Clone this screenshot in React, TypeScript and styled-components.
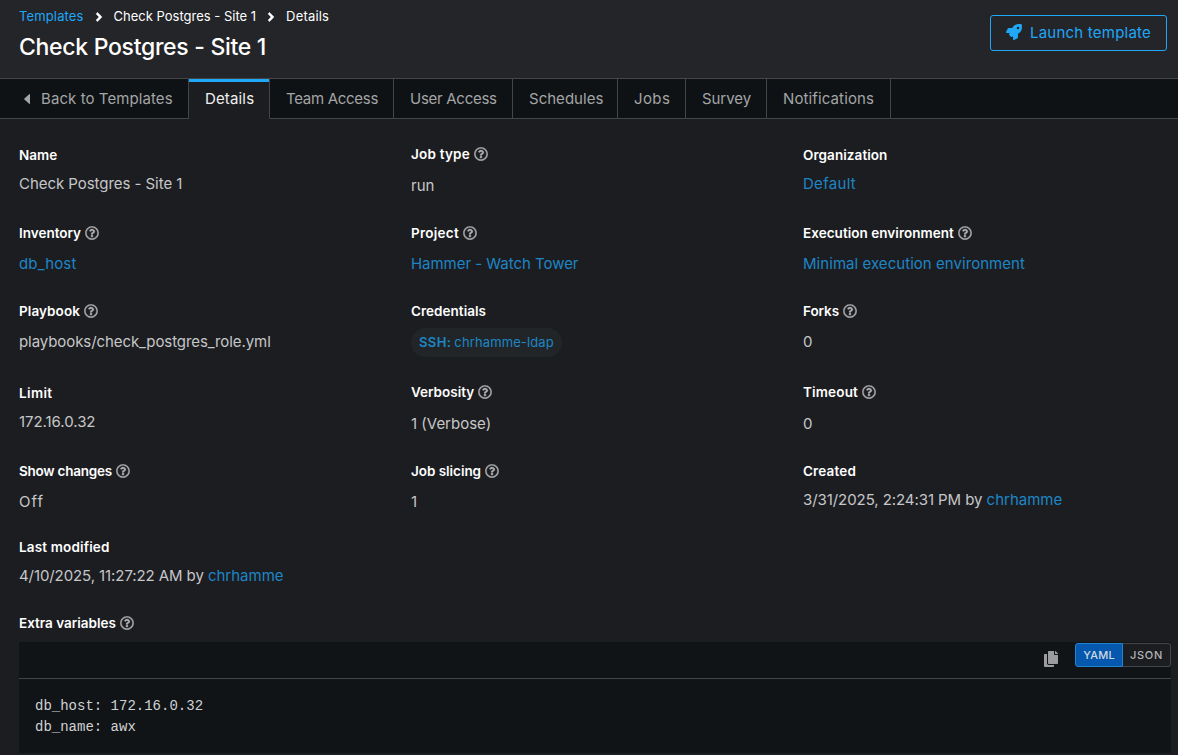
import React from 'react';
import styled, { createGlobalStyle } from 'styled-components';
import { FaAngleRight, FaCopy, FaRegQuestionCircle, FaRocket } from 'react-icons/fa';

const color = {
  header: '#242529',
  tabs: '#0f1214',
  content: '#1c1d21',
  editor: '#111417',
  border: '#444548',
  text: '#c6c7c8',
  muted: '#a3a5a7',
  link: '#1e86c6',
  accent: '#1fa7f8',
};

const GlobalStyle = createGlobalStyle`
  *, *::before, *::after { box-sizing: border-box; }
  body {
    margin: 0;
    background: ${color.content};
    color: ${color.text};
    font-family: Inter, sans-serif;
    overflow: hidden;
  }
  #root { height: 100vh; }
`;

const Tracked = styled.span<{ $track?: number }>`
  letter-spacing: ${({ $track = 0 }) => $track}px;
  white-space: pre;
`;

const Page = styled.div`
  display: flex;
  flex-direction: column;
  height: 755px;
`;

const Header = styled.header`
  display: flex;
  justify-content: space-between;
  align-items: flex-start;
  height: 78px;
  padding: 0 11px 0 19px;
  background: ${color.header};
`;

const Breadcrumb = styled.nav`
  display: flex;
  align-items: center;
  height: 21px;
  margin-top: 6px;
  font-size: 13px;
  line-height: 21px;
  color: #fff;

  svg {
    width: 14px;
    height: 14px;
    margin: 0 8px;
    stroke: currentColor;
    stroke-width: 14px;
  }
`;

const BreadcrumbLink = styled(Tracked)`
  color: ${color.accent};
`;

const Title = styled.h1`
  margin: 5px 0 0;
  font-size: 23px;
  font-weight: 500;
  line-height: 31px;
  color: #fff;
`;

const LaunchButton = styled.button`
  display: flex;
  align-items: center;
  gap: 8px;
  width: 177px;
  height: 36px;
  margin-top: 15px;
  padding: 0 15px;
  border: 1px solid ${color.accent};
  border-radius: 3px;
  background: transparent;
  color: ${color.accent};
  font: 400 15px/24px Inter, sans-serif;

  svg {
    margin-bottom: 2px;
  }
`;

const TabBar = styled.nav`
  display: flex;
  height: 41px;
  border-top: 1px solid ${color.border};
  background: ${color.tabs};
`;

const Tab = styled.a<{ $width: number; $active?: boolean }>`
  display: flex;
  align-items: center;
  flex: none;
  width: ${({ $width }) => $width}px;
  padding-left: 16px;
  border-right: 1px solid ${color.border};
  border-bottom: 1px solid ${({ $active }) => ($active ? color.content : color.border)};
  background: ${({ $active }) => ($active ? color.content : 'transparent')};
  color: ${({ $active }) => ($active ? '#f0f0f0' : color.muted)};
  font-size: 15px;
  line-height: 24px;
  box-shadow: ${({ $active }) => ($active ? `inset 0 3px 0 ${color.accent}` : 'none')};
`;

const BackTab = styled(Tab)`
  padding-left: 24px;
  gap: 11px;
`;

const TabFill = styled.div`
  flex: 1;
  border-bottom: 1px solid ${color.border};
`;

const Details = styled.main`
  padding: 25px 7px 0 19px;
`;

const DetailRow = styled.section<{ $height: number }>`
  display: grid;
  grid-template-columns: repeat(3, 392px);
  align-items: start;
  height: ${({ $height }) => $height}px;
`;

const DetailItem = styled.div<{ $inset?: number }>`
  display: flex;
  flex-direction: column;
  align-items: flex-start;
  padding-top: ${({ $inset = 0 }) => $inset}px;
`;

const Label = styled.div`
  display: flex;
  align-items: center;
  gap: 4px;
  height: 21px;
  font-size: 13.5px;
  font-weight: 600;
  line-height: 21px;
  color: #fff;

  svg {
    width: 14px;
    height: 14px;
    margin-bottom: 1px;
    color: #acadaf;
    stroke: currentColor;
    stroke-width: 10px;
  }
`;

const Value = styled.div<{ $gap: number }>`
  margin-top: ${({ $gap }) => $gap}px;
  font-size: 15px;
  line-height: 24px;
`;

const Link = styled(Tracked)`
  color: ${color.link};
`;

const Chip = styled.span`
  display: flex;
  align-items: center;
  gap: 3px;
  width: 151px;
  height: 29px;
  margin-top: 6px;
  padding-left: 8px;
  border-radius: 15px;
  background: #212528;
  color: ${color.link};
  font-size: 13px;
  line-height: 21px;
`;

const ChipKind = styled(Tracked)`
  font-weight: 600;
`;

const Editor = styled.section`
  height: 111px;
  margin-top: 8px;
  background: ${color.editor};
`;

const EditorToolbar = styled.div`
  display: flex;
  justify-content: flex-end;
  align-items: flex-start;
  height: 37px;
  padding-top: 1px;
  border-bottom: 1px solid ${color.border};
`;

const CopyButton = styled.button`
  display: flex;
  margin: 8px 17px 0 0;
  padding: 0;
  border: 0;
  background: none;
  color: #9b9c9e;

  svg {
    width: 14px;
    height: 16px;
  }
`;

const ModeButton = styled.button<{ $selected?: boolean }>`
  width: 48px;
  height: 24px;
  padding: 0;
  border: 1px solid ${({ $selected }) => ($selected ? '#1f86cf' : color.border)};
  border-left-width: ${({ $selected }) => ($selected ? 1 : 0)}px;
  border-radius: ${({ $selected }) => ($selected ? '3px 0 0 3px' : '0 3px 3px 0')};
  background: ${({ $selected }) => ($selected ? '#0558ad' : color.content)};
  color: ${({ $selected }) => ($selected ? '#cfd8e2' : '#b4b5b7')};
  font: 500 11px/18px Inter, sans-serif;
  letter-spacing: ${({ $selected }) => ($selected ? 0.2 : 0.7)}px;
`;

const Code = styled.pre`
  margin: 0;
  padding: 17px 16px;
  font: 14px/21px 'Liberation Mono', monospace;
  color: #d0d1d2;
`;

type DetailProps = {
  label: string;
  track?: number;
  help?: boolean;
  inset?: number;
  gap?: number;
  children: React.ReactNode;
};

function Detail({ label, track, help, inset, gap = 8, children }: DetailProps) {
  return (
    <DetailItem $inset={inset}>
      <Label>
        <Tracked $track={track}>{label}</Tracked>
        {help && <FaRegQuestionCircle />}
      </Label>
      <Value $gap={gap}>{children}</Value>
    </DetailItem>
  );
}

const tabs = [
  { name: 'Details', width: 81, track: 0.15, active: true },
  { name: 'Team Access', width: 124, track: -0.29 },
  { name: 'User Access', width: 119, track: -0.28 },
  { name: 'Schedules', width: 105, track: 0.02 },
  { name: 'Jobs', width: 68, track: 0.4 },
  { name: 'Survey', width: 81, track: -0.06 },
  { name: 'Notifications', width: 124, track: 0.12 },
];

export default function App() {
  return (
    <Page>
      <GlobalStyle />
      <Header>
        <div>
          <Breadcrumb>
            <BreadcrumbLink $track={0.14}>Templates</BreadcrumbLink>
            <FaAngleRight />
            <Tracked $track={0}>Check Postgres - Site 1</Tracked>
            <FaAngleRight />
            <Tracked $track={0.18}>Details</Tracked>
          </Breadcrumb>
          <Title>
            <Tracked $track={-0.3}>Check Postgres - Site 1</Tracked>
          </Title>
        </div>
        <LaunchButton>
          <FaRocket size={16} />
          <Tracked $track={0.22}>Launch template</Tracked>
        </LaunchButton>
      </Header>

      <TabBar>
        <BackTab $width={189}>
          <svg width="6" height="10" viewBox="0 0 6 10" fill="currentColor">
            <path d="M6 .6v8.8c0 .5-.5.7-.8.4L.4 5.4a.5.5 0 0 1 0-.8L5.200.2c.3-.3.8-.1.8.4z" />
          </svg>
          <Tracked $track={0.08}>Back to Templates</Tracked>
        </BackTab>
        {tabs.map((t) => (
          <Tab key={t.name} $width={t.width} $active={t.active}>
            <Tracked $track={t.track}>{t.name}</Tracked>
          </Tab>
        ))}
        <TabFill />
      </TabBar>

      <Details>
        <DetailRow $height={79}>
          <Detail label="Name" inset={1} gap={6}>
            <Tracked $track={-0.05}>Check Postgres - Site 1</Tracked>
          </Detail>
          <Detail label="Job type" track={0.2} help gap={9}>run</Detail>
          <Detail label="Organization" track={0.07} inset={1} gap={6}>
            <Link $track={0.29}>Default</Link>
          </Detail>
        </DetailRow>

        <DetailRow $height={78}>
          <Detail label="Inventory" help>
            <Link $track={0.15}>db_host</Link>
          </Detail>
          <Detail label="Project" track={0.27} help>
            <Link $track={-0.03}>Hammer - Watch Tower</Link>
          </Detail>
          <Detail label="Execution environment" track={0.04} help>
            <Link $track={0.05}>Minimal execution environment</Link>
          </Detail>
        </DetailRow>

        <DetailRow $height={81}>
          <Detail label="Playbook" track={0.08} help>
            <Tracked $track={-0.08}>playbooks/check_postgres_role.yml</Tracked>
          </Detail>
          <DetailItem>
            <Label>
              <Tracked $track={0.03}>Credentials</Tracked>
            </Label>
            <Chip>
              <ChipKind $track={0.4}>SSH:</ChipKind>
              <Tracked $track={0.12}>chrhamme-ldap</Tracked>
            </Chip>
          </DetailItem>
          <Detail label="Forks" track={-0.07} help>0</Detail>
        </DetailRow>

        <DetailRow $height={79}>
          <Detail label="Limit" track={0.38} inset={1} gap={6}>
            <Tracked $track={-0.05}>172.16.0.32</Tracked>
          </Detail>
          <Detail label="Verbosity" help gap={9}>1 (Verbose)</Detail>
          <Detail label="Timeout" track={0.17} help gap={9}>0</Detail>
        </DetailRow>

        <DetailRow $height={76}>
          <Detail label="Show changes" track={-0.24} help>
            <Tracked $track={1}>Off</Tracked>
          </Detail>
          <Detail label="Job slicing" track={-0.04} help>1</Detail>
          <Detail label="Created" track={0.15} gap={6}>
            <Tracked $track={-0.07}>3/31/2025, 2:24:31 PM by </Tracked>
            <Link>chrhamme</Link>
          </Detail>
        </DetailRow>

        <DetailRow $height={76}>
          <Detail label="Last modified" track={0.15} gap={6}>
            <Tracked $track={-0.09}>4/10/2025, 11:27:22 AM by </Tracked>
            <Link>chrhamme</Link>
          </Detail>
        </DetailRow>

        <Label>
          <Tracked>Extra variables</Tracked>
          <FaRegQuestionCircle />
        </Label>
        <Editor>
          <EditorToolbar>
            <CopyButton aria-label="Copy">
              <FaCopy />
            </CopyButton>
            <ModeButton $selected>YAML</ModeButton>
            <ModeButton>JSON</ModeButton>
          </EditorToolbar>
          <Code>{'db_host: 172.16.0.32\ndb_name: awx'}</Code>
        </Editor>
      </Details>
    </Page>
  );
}
